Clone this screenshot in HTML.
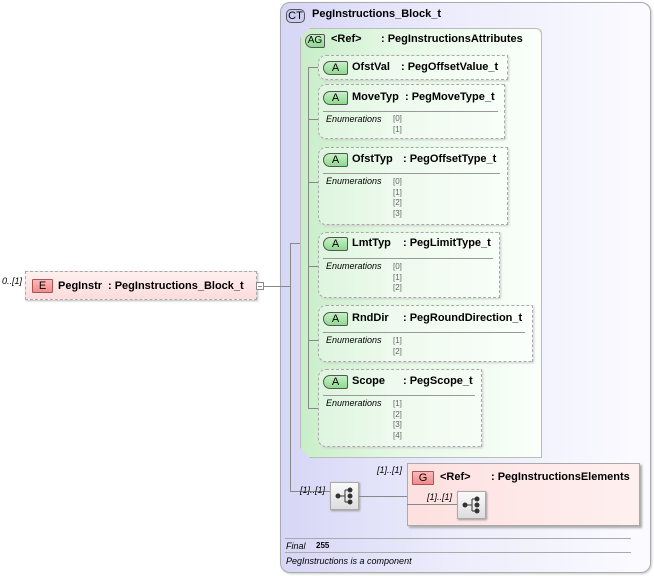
<!DOCTYPE html>
<html><head><style>
*{margin:0;padding:0;box-sizing:border-box}
body{width:654px;height:576px;background:#fff;position:relative;overflow:hidden;font-family:"Liberation Sans",Arial,sans-serif;font-size:11px;color:#000}
.a{position:absolute}
.ct{left:280px;top:2px;width:371px;height:571px;border:1px solid #aaa;border-radius:10px;background:linear-gradient(90deg,#d6d6f6 0%,#ececfc 45%,#fbfbff 100%);box-shadow:1px 1px 2px #ccc}
.ag{left:300px;top:28px;width:242px;height:430px;border:1px solid #bbb;border-radius:0 6px 0 0;background:linear-gradient(90deg,#c8eec8 0%,#e6f8e6 40%,#fafffa 100%);clip-path:polygon(10px 0,100% 0,100% 100%,10px 100%,0 calc(100% - 10px),0 10px);box-shadow:2px 2px 2px #bbb}
.box{border:1px dashed #aaa;background:rgba(255,255,255,0.35);border-radius:8px 0 0 8px;box-shadow:1px 1px 2px #ccc}
.tag{position:absolute;height:14px;border:1px solid #555;border-radius:7px 2px 2px 7px;font-size:11px;text-align:center;line-height:12px}
.gt{background:linear-gradient(#c6f0c6,#8fd88f)}
.b{font-weight:bold;position:absolute;white-space:nowrap}
.en{position:absolute;font-style:italic;font-size:9px}
.ev{position:absolute;font-size:8px;color:#666;line-height:10.5px}
.hr{position:absolute;height:1px;background:#999}
.ln{position:absolute;background:#888}
.it{font-style:italic;font-size:9px;position:absolute;white-space:nowrap}
.seq{position:absolute;width:29px;height:28px;border:1px solid #aaa;background:linear-gradient(#fafafa,#ddd);box-shadow:1px 1px 2px #999}
</style></head><body>
<div class="a ct"></div>
<div class="tag" style="left:286px;top:9px;width:19px;background:#ccccee;border-color:#555;border-radius:5px">CT</div>
<div class="b" style="left:312px;top:8px;font-size:11px">PegInstructions_Block_t</div>

<div class="a ag"></div>
<div class="tag gt" style="left:305px;top:34px;width:20px;font-size:10px">AG</div>
<div class="b" style="left:331px;top:33px">&lt;Ref&gt;</div>
<div class="b" style="left:381px;top:33px">: PegInstructionsAttributes</div>

<div class="ln" style="left:308px;top:67px;width:1px;height:342px"></div>

<!-- OfstVal -->
<div class="a box" style="left:318px;top:55px;width:190px;height:25px"></div>
<div class="ln" style="left:308px;top:67px;width:10px;height:1px"></div>
<div class="tag gt" style="left:323px;top:61px;width:25px">A</div>
<div class="b" style="left:352px;top:61px">OfstVal</div>
<div class="b" style="left:401px;top:61px">: PegOffsetValue_t</div>

<!-- MoveTyp -->
<div class="a box" style="left:318px;top:84px;width:187px;height:55px"></div>
<div class="tag gt" style="left:323px;top:91px;width:25px">A</div>
<div class="b" style="left:352px;top:91px">MoveTyp</div>
<div class="b" style="left:405px;top:91px">: PegMoveType_t</div>
<div class="hr" style="left:323px;top:111px;width:175px"></div>
<div class="ln" style="left:308px;top:119px;width:10px;height:1px"></div>
<div class="en" style="left:326px;top:114px">Enumerations</div>
<div class="ev" style="left:393px;top:114px">[0]<br>[1]</div>

<!-- OfstTyp -->
<div class="a box" style="left:318px;top:147px;width:190px;height:78px"></div>
<div class="tag gt" style="left:323px;top:153px;width:25px">A</div>
<div class="b" style="left:352px;top:153px">OfstTyp</div>
<div class="b" style="left:403px;top:153px">: PegOffsetType_t</div>
<div class="hr" style="left:323px;top:173px;width:177px"></div>
<div class="ln" style="left:308px;top:182px;width:10px;height:1px"></div>
<div class="en" style="left:326px;top:176px">Enumerations</div>
<div class="ev" style="left:393px;top:177px">[0]<br>[1]<br>[2]<br>[3]</div>

<!-- LmtTyp -->
<div class="a box" style="left:318px;top:232px;width:182px;height:66px"></div>
<div class="tag gt" style="left:323px;top:237px;width:25px">A</div>
<div class="b" style="left:352px;top:237px">LmtTyp</div>
<div class="b" style="left:403px;top:237px">: PegLimitType_t</div>
<div class="hr" style="left:323px;top:258px;width:170px"></div>
<div class="ln" style="left:308px;top:266px;width:10px;height:1px"></div>
<div class="en" style="left:326px;top:261px">Enumerations</div>
<div class="ev" style="left:393px;top:262px">[0]<br>[1]<br>[2]</div>

<!-- RndDir -->
<div class="a box" style="left:318px;top:305px;width:215px;height:57px"></div>
<div class="tag gt" style="left:323px;top:312px;width:25px">A</div>
<div class="b" style="left:352px;top:312px">RndDir</div>
<div class="b" style="left:403px;top:312px">: PegRoundDirection_t</div>
<div class="hr" style="left:323px;top:332px;width:202px"></div>
<div class="ln" style="left:308px;top:340px;width:10px;height:1px"></div>
<div class="en" style="left:326px;top:335px">Enumerations</div>
<div class="ev" style="left:393px;top:336px">[1]<br>[2]</div>

<!-- Scope -->
<div class="a box" style="left:318px;top:369px;width:164px;height:78px"></div>
<div class="tag gt" style="left:323px;top:375px;width:25px">A</div>
<div class="b" style="left:352px;top:375px">Scope</div>
<div class="b" style="left:403px;top:375px">: PegScope_t</div>
<div class="hr" style="left:323px;top:395px;width:152px"></div>
<div class="ln" style="left:308px;top:408px;width:10px;height:1px"></div>
<div class="en" style="left:326px;top:398px">Enumerations</div>
<div class="ev" style="left:393px;top:399px">[1]<br>[2]<br>[3]<br>[4]</div>

<!-- Element -->
<div class="it" style="left:2px;top:276px">0..[1]</div>
<div class="a" style="left:25px;top:271px;width:232px;height:29px;border:1px dashed #aaa;background:linear-gradient(#fff0f0,#fcdcdc);box-shadow:1px 1px 2px #bbb"></div>
<div class="tag" style="left:32px;top:279px;width:21px;background:linear-gradient(#ffb8b8,#f08c8c);border-radius:1px;border-color:#a55">E</div>
<div class="b" style="left:58px;top:280px">PegInstr</div>
<div class="b" style="left:108px;top:280px">: PegInstructions_Block_t</div>
<div class="a" style="left:256px;top:282px;width:8px;height:8px;border:1px solid #888;background:#fff"></div>
<div class="ln" style="left:258px;top:286px;width:4px;height:1px"></div>
<div class="ln" style="left:264px;top:286px;width:26px;height:1px"></div>
<div class="ln" style="left:290px;top:243px;width:1px;height:249px"></div>
<div class="ln" style="left:290px;top:243px;width:10px;height:1px"></div>
<div class="ln" style="left:290px;top:491px;width:40px;height:1px"></div>

<!-- Sequence -->
<div class="it" style="left:300px;top:485px">[1]..[1]</div>
<div class="seq" style="left:330px;top:482px"></div>
<svg class="a" style="left:330px;top:482px" width="29" height="28"><g fill="#333" stroke="#333"><circle cx="8" cy="14" r="2"/><circle cx="20" cy="8" r="2"/><circle cx="20" cy="14" r="2"/><circle cx="20" cy="20" r="2"/><path d="M8 14H15M15 8V20M15 8H20M15 20H20" fill="none"/></g></svg>
<div class="ln" style="left:359px;top:496px;width:48px;height:1px"></div>

<!-- Group -->
<div class="it" style="left:377px;top:465px">[1]..[1]</div>
<div class="a" style="left:407px;top:463px;width:233px;height:63px;border:1px solid #aaa;background:linear-gradient(90deg,#fde0e0,#fff0f0);box-shadow:2px 2px 2px #aaa"></div>
<div class="tag" style="left:412px;top:471px;width:22px;background:linear-gradient(#ffb8b8,#f08c8c);border-radius:1px;border-color:#a55">G</div>
<div class="b" style="left:440px;top:471px">&lt;Ref&gt;</div>
<div class="b" style="left:491px;top:471px">: PegInstructionsElements</div>
<div class="it" style="left:427px;top:492px">[1]..[1]</div>
<div class="ln" style="left:407px;top:504px;width:50px;height:1px"></div>
<div class="seq" style="left:457px;top:491px"></div>
<svg class="a" style="left:457px;top:491px" width="29" height="28"><g fill="#333" stroke="#333"><circle cx="8" cy="14" r="2"/><circle cx="20" cy="8" r="2"/><circle cx="20" cy="14" r="2"/><circle cx="20" cy="20" r="2"/><path d="M8 14H15M15 8V20M15 8H20M15 20H20" fill="none"/></g></svg>

<!-- footer -->
<div class="hr" style="left:285px;top:538px;width:346px;background:#aaa"></div>
<div class="it" style="left:286px;top:541px">Final</div>
<div class="a" style="left:316px;top:541px;font-size:8px;font-weight:bold">255</div>
<div class="hr" style="left:285px;top:552px;width:346px;background:#aaa"></div>
<div class="it" style="left:286px;top:556px">PegInstructions is a component</div>
</body></html>
